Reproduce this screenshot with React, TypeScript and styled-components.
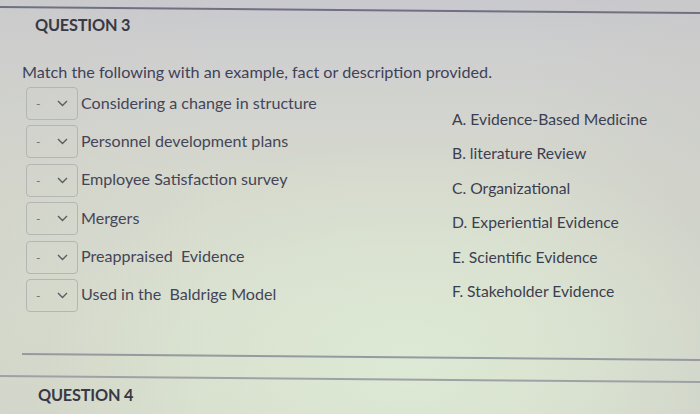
import React from "react";
import styled, { createGlobalStyle } from "styled-components";

const Global = createGlobalStyle`
  html, body { margin: 0; padding: 0; width: 700px; height: 414px; overflow: hidden; }
  body { font-family: Lato, "Liberation Sans", sans-serif; }
`;

const Page = styled.div`
  width: 700px;
  height: 414px;
  overflow: hidden;
  display: flex;
  flex-direction: column;
  background:
    radial-gradient(ellipse 360px 220px at 58% 88%, rgba(222, 236, 214, 0.85), rgba(222, 236, 214, 0) 100%),
    linear-gradient(90deg, rgba(205, 205, 200, 0.35) 0%, rgba(0, 0, 0, 0) 30%, rgba(0, 0, 0, 0) 75%, rgba(200, 200, 198, 0.4) 100%),
    linear-gradient(180deg, #c9c9ce 0%, #d0d1cf 18%, #d6d9cd 45%, #d8ddcd 75%, #d6dbcb 100%);
`;

const Rule = styled.div<{ $top: number; $left?: number; $color?: string; $h?: number }>`
  height: ${(p) => p.$h ?? 2}px;
  margin-top: ${(p) => p.$top}px;
  margin-left: ${(p) => p.$left ?? 0}px;
  background: ${(p) => p.$color ?? "#6f7182"};
  transform-origin: left center;
  transform: rotate(0.5deg);
  flex-shrink: 0;
`;

const Heading = styled.div<{ $left: number; $top: number }>`
  padding-left: ${(p) => p.$left}px;
  margin-top: ${(p) => p.$top}px;
  font-size: 16.3px;
  font-weight: 700;
  color: #383945;
  letter-spacing: -0.2px;
  line-height: 18px;
`;

const Instruction = styled.div`
  margin-top: 28px;
  padding-left: 22px;
  font-size: 16.2px;
  color: #404157;
  line-height: 20px;
`;

const Body = styled.div`
  display: grid;
  grid-template-columns: 426px 1fr;
  padding-left: 26px;
  margin-top: 5px;
`;

const Prompts = styled.div`
  display: flex;
  flex-direction: column;
  gap: 5.4px;
`;

const PromptRow = styled.div`
  display: flex;
  align-items: center;
  gap: 3px;
`;

const Select = styled.div`
  width: 52px;
  height: 33px;
  box-sizing: border-box;
  border: 1px solid #b3b6b3;
  border-radius: 4px;
  display: flex;
  align-items: center;
  padding-left: 9px;
  gap: 17px;
  color: #6d6f72;
  font-size: 12px;
`;

const PromptText = styled.span`
  font-size: 16.1px;
  color: #444558;
  margin-top: -3px;
  white-space: pre;
`;

const Options = styled.div`
  display: flex;
  flex-direction: column;
  gap: 14.8px;
  padding-top: 23px;
`;

const Option = styled.div`
  font-size: 15.7px;
  line-height: 19.6px;
  color: #3c3e50;
  white-space: pre;
`;

const Chevron = () => (
  <svg width="11" height="7" viewBox="0 0 11 7">
    <path d="M1 1 L5.5 5.5 L10 1" fill="none" stroke="#5a5c62" strokeWidth="1.4" />
  </svg>
);

const prompts = [
  "Considering a change in structure",
  "Personnel development plans",
  "Employee Satisfaction survey",
  "Mergers",
  "Preappraised  Evidence",
  "Used in the  Baldrige Model",
];

const options = [
  "A. Evidence-Based Medicine",
  "B. literature Review",
  "C. Organizational",
  "D. Experiential Evidence",
  "E. Scientific Evidence",
  "F. Stakeholder Evidence",
];

export default function App() {
  return (
    <>
      <Global />
      <Page>
        <Rule $top={6} />
        <Heading $left={35} $top={8}>QUESTION 3</Heading>
        <Instruction>Match the following with an example, fact or description provided.</Instruction>
        <Body>
          <Prompts>
            {prompts.map((p) => (
              <PromptRow key={p}>
                <Select>
                  <span>-</span>
                  <Chevron />
                </Select>
                <PromptText>{p}</PromptText>
              </PromptRow>
            ))}
          </Prompts>
          <Options>
            {options.map((o) => (
              <Option key={o}>{o}</Option>
            ))}
          </Options>
        </Body>
        <Rule $top={41} $left={22} $color="#959aa0" $h={1.5} />
        <Rule $top={21} $color="#9ea2a6" $h={1.5} />
        <Heading $left={38} $top={9}>QUESTION 4</Heading>
      </Page>
    </>
  );
}
